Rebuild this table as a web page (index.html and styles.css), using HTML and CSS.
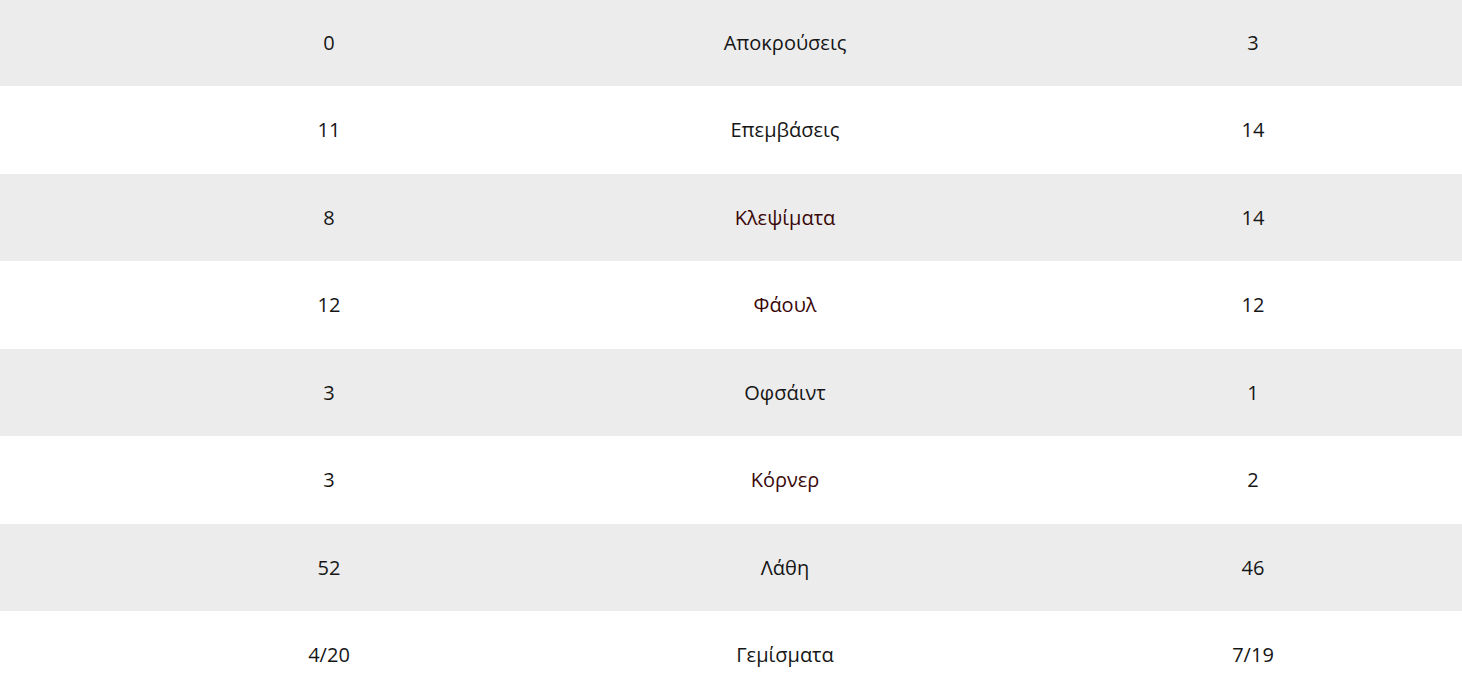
FILE: index.html
```html
<!DOCTYPE html>
<html lang="el">
<head>
<meta charset="utf-8">
<link rel="stylesheet" href="styles.css">
</head>
<body>
<div class="stats">
  <div class="row alt"><div class="cell">0</div><div class="cell label">Αποκρούσεις</div><div class="cell away">3</div></div>
  <div class="row"><div class="cell">11</div><div class="cell label">Επεμβάσεις</div><div class="cell away">14</div></div>
  <div class="row alt"><div class="cell">8</div><div class="cell label red">Κλεψίματα</div><div class="cell away">14</div></div>
  <div class="row"><div class="cell">12</div><div class="cell label red">Φάουλ</div><div class="cell away">12</div></div>
  <div class="row alt"><div class="cell">3</div><div class="cell label">Οφσάιντ</div><div class="cell away">1</div></div>
  <div class="row"><div class="cell">3</div><div class="cell label red">Κόρνερ</div><div class="cell away">2</div></div>
  <div class="row alt"><div class="cell">52</div><div class="cell label">Λάθη</div><div class="cell away">46</div></div>
  <div class="row"><div class="cell">4/20</div><div class="cell label">Γεμίσματα</div><div class="cell away">7/19</div></div>
</div>
</body>
</html>
```

FILE: styles.css
```css
html, body {
  margin: 0;
  padding: 0;
  background: #fff;
  overflow: hidden;
}
body {
  font-family: "Open Sans", "Noto Sans", sans-serif;
  font-size: 20px;
  color: #161616;
}
.stats {
  margin-top: -1.5px;
  width: 100%;
}
.row {
  display: grid;
  grid-template-columns: 658px 254px 1fr;
  height: 87.5px;
  align-items: center;
}
.row.alt {
  background: #ececec;
}
.cell {
  text-align: center;
  white-space: nowrap;
}
.away {
  padding-left: 132px;
}
.red {
  color: #3a0808;
}
```
